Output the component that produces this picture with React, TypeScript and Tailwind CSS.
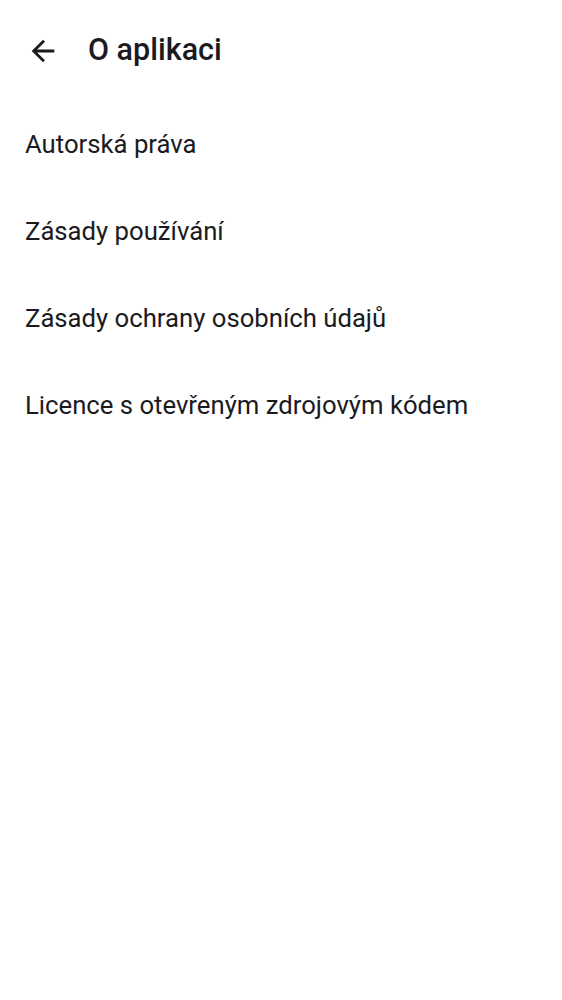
const items = [
  'Autorská práva',
  'Zásady používání',
  'Zásady ochrany osobních údajů',
  'Licence s otevřeným zdrojovým kódem',
]

export default function App() {
  return (
    <div className="min-h-screen w-full bg-white text-[#1b1b1f]" style={{ fontFamily: 'Roboto, "Noto Sans", sans-serif' }}>
      {/* Top bar */}
      <div className="flex h-[101px] items-center">
        <button className="ml-[26px] flex h-[34px] w-[34px] items-center justify-center">
          <svg width="34" height="34" viewBox="0 0 24 24" fill="#1b1b1f">
            <path d="M20 11H7.83l5.59-5.59L12 4l-8 8 8 8 1.41-1.41L7.83 13H20v-2z" />
          </svg>
        </button>
        <h1 className="ml-[28px] text-[30.5px] font-medium leading-none">O aplikaci</h1>
      </div>

      {/* Items */}
      <div className="flex flex-col">
        {items.map((t) => (
          <div key={t} className="flex h-[87px] items-center px-[25px] text-[25.7px] leading-none">
            {t}
          </div>
        ))}
      </div>
    </div>
  )
}
